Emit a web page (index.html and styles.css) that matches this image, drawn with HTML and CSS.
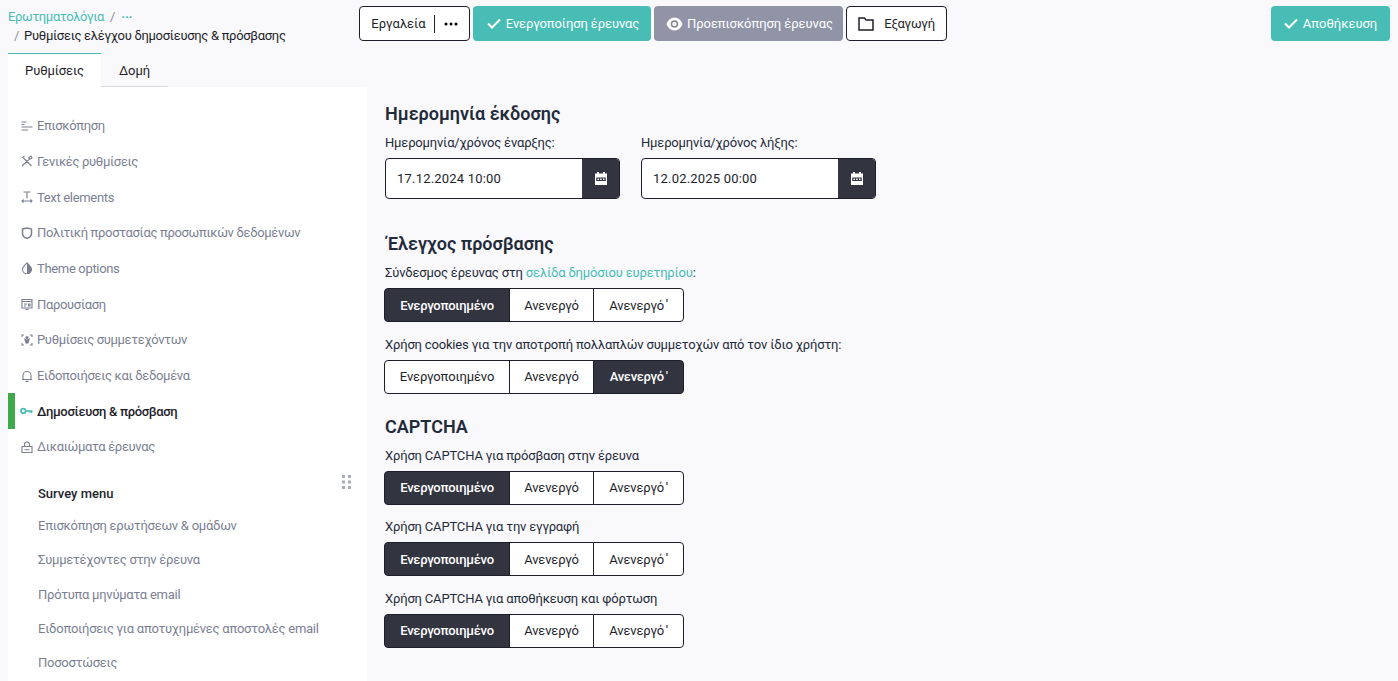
FILE: index.html
```html
<!DOCTYPE html>
<html lang="el">
<head>
  <title>Ρυθμίσεις ελέγχου δημοσίευσης & πρόσβασης</title>
  <meta charset="utf-8">
  <link rel="stylesheet" href="styles.css">
</head>
<body>
  <div class="topbar">
    <div class="breadcrumb">
      <div class="crumb-line"><a class="crumb-link">Ερωτηματολόγια</a><span class="crumb-sep">/</span><span class="crumb-more">···</span></div>
      <div class="crumb-line crumb-current"><span class="crumb-sep">/</span>Ρυθμίσεις ελέγχου δημοσίευσης &amp; πρόσβασης</div>
    </div>
    <div class="toolbar">
      <button class="btn btn-outline btn-tools">Εργαλεία<span class="tools-divider"></span>
        <svg width="14" height="4" viewBox="0 0 14 4"><circle cx="2" cy="2" r="1.5"/><circle cx="7" cy="2" r="1.5"/><circle cx="12" cy="2" r="1.5"/></svg>
      </button>
      <button class="btn btn-teal btn-activate">
        <svg class="check" width="14" height="11" viewBox="0 0 14 11"><path d="M1 5.500l4 4 8-8"/></svg>Ενεργοποίηση έρευνας
      </button>
      <button class="btn btn-gray btn-preview">
        <svg width="17" height="14" viewBox="0 0 17 14"><path fill="#fff" d="M8.500 0.500c4 0 6.800 3.200 8 6.500-1.200 3.300-4 6.500-8 6.500s-6.800-3.200-8-6.500c1.200-3.300 4-6.500 8-6.500z"/><circle cx="8.500" cy="7" r="3" fill="none" stroke="#81859a" stroke-width="1.600"/></svg>Προεπισκόπηση έρευνας
      </button>
      <button class="btn btn-outline btn-export">
        <svg width="16" height="14" viewBox="0 0 16 14"><path d="M1 1h5.500l1.500 2h7v10H1z" fill="none" stroke="#1e1e2a" stroke-width="1.500"/></svg>Εξαγωγή
      </button>
    </div>
    <button class="btn btn-teal btn-save">
      <svg class="check" width="14" height="11" viewBox="0 0 14 11"><path d="M1 5.500l4 4 8-8"/></svg>Αποθήκευση
    </button>
  </div>

  <div class="page">
    <aside class="side">
      <div class="tabs">
        <div class="tab tab-active">Ρυθμίσεις</div>
        <div class="tab">Δομή</div>
      </div>
      <div class="side-panel">
        <ul class="nav">
          <li class="nav-item">
            <svg viewBox="0 0 12 12"><path d="M0.500 2h5M0.500 4.500h3M0.500 7h11M0.500 10h6.500"/></svg>Επισκόπηση</li>
          <li class="nav-item">
            <svg viewBox="0 0 12 12"><path d="M1 11l6.500-6M2.500 3l8 8M1 3l2.500-2M8 4.500l3-1.500-1-2-2 1.500z"/></svg>Γενικές ρυθμίσεις</li>
          <li class="nav-item">
            <svg viewBox="0 0 12 12"><path d="M2.500 1h7M6 1v6.500M1 10h10M2.500 8.500L1 10l1.500 1.500M9.500 8.500L11 10l-1.500 1.500"/></svg>Text elements</li>
          <li class="nav-item">
            <svg class="icon-bold" viewBox="0 0 12 12"><path d="M1.500 2l4.500-1 4.500 1v4.500c0 2.500-2 4-4.500 5-2.500-1-4.500-2.500-4.500-5z"/></svg>Πολιτική προστασίας προσωπικών δεδομένων</li>
          <li class="nav-item">
            <svg viewBox="0 0 12 12"><path d="M6 0.800c2.500 2.500 4.500 4.500 4.500 6.500a4.500 4.500 0 0 1-9 0c0-2 2-4 4.500-6.500z"/><path class="fill" d="M6 0.800c2.500 2.500 4.500 4.500 4.500 6.500a4.500 4.500 0 0 1-4.500 4.500z"/></svg>Theme options</li>
          <li class="nav-item">
            <svg viewBox="0 0 12 12"><path d="M1 1.500h10v8.500H1zM1 3.500h10M3 6h3M3 8h2M7.500 6v2h1.500V6zM4.500 11.500h3"/></svg>Παρουσίαση</li>
          <li class="nav-item">
            <svg viewBox="0 0 12 12"><path d="M1 3V1h2M9 1h2v2M1 9v2h2M11 9v2H9"/><circle class="fill" cx="6" cy="3.500" r="1.500"/><path class="fill" d="M3 4l3 1.500L9 4 7.500 9.500h-3z"/></svg>Ρυθμίσεις συμμετεχόντων</li>
          <li class="nav-item">
            <svg viewBox="0 0 12 12"><path d="M2 9.500V5.500a4 4 0 0 1 8 0v4zM1 9.500h10M4.500 11.400h3"/></svg>Ειδοποιήσεις και δεδομένα</li>
          <li class="nav-item nav-active">
            <svg viewBox="0 0 13 12"><circle cx="3.300" cy="6" r="2.300"/><path d="M5.600 6h7M11.500 6v2M9.300 6v1.500"/></svg>Δημοσίευση &amp; πρόσβαση</li>
          <li class="nav-item">
            <svg viewBox="0 0 12 12"><path d="M1 5.500h10v6H1zM3.500 5.500V3.500a2.500 2.500 0 0 1 5 0v2M3.500 8.800h5"/></svg>Δικαιώματα έρευνας</li>
        </ul>
        <div class="menu-handle">
          <svg width="9" height="14" viewBox="0 0 9 14"><path d="M0 0h3v3H0zM6 0h3v3H6zM0 5.500h3v3H0zM6 5.500h3v3H6zM0 11h3v3H0zM6 11h3v3H6z"/></svg>
        </div>
        <div class="menu-title">Survey menu</div>
        <ul class="submenu">
          <li>Επισκόπηση ερωτήσεων &amp; ομάδων</li>
          <li>Συμμετέχοντες στην έρευνα</li>
          <li>Πρότυπα μηνύματα email</li>
          <li>Ειδοποιήσεις για αποτυχημένες αποστολές email</li>
          <li>Ποσοστώσεις</li>
        </ul>
      </div>
    </aside>

    <main class="content">
      <h2 class="section-title">Ημερομηνία έκδοσης</h2>
      <div class="date-row">
        <div class="date-field">
          <label class="field-label">Ημερομηνία/χρόνος έναρξης:</label>
          <div class="date-input">
            <span class="date-value">17.12.2024 10:00</span>
            <span class="date-addon"><svg width="12" height="13" viewBox="0 0 12 13"><path fill="#fff" d="M2 0h2v1.500h4V0h2v1.500h2V13H0V1.500h2z"/><path fill="#32343f" d="M1.200 5.500h9.600v3.500H1.200z"/><path fill="#fff" d="M2.500 6.500h1.500v1.500H2.500zM5.200 6.500h1.500v1.500H5.200zM8 6.500h1.500v1.500H8z"/></svg></span>
          </div>
        </div>
        <div class="date-field">
          <label class="field-label">Ημερομηνία/χρόνος λήξης:</label>
          <div class="date-input">
            <span class="date-value">12.02.2025 00:00</span>
            <span class="date-addon"><svg width="12" height="13" viewBox="0 0 12 13"><path fill="#fff" d="M2 0h2v1.500h4V0h2v1.500h2V13H0V1.500h2z"/><path fill="#32343f" d="M1.200 5.500h9.600v3.500H1.200z"/><path fill="#fff" d="M2.500 6.500h1.500v1.500H2.500zM5.200 6.500h1.500v1.500H5.200zM8 6.500h1.500v1.500H8z"/></svg></span>
          </div>
        </div>
      </div>

      <h2 class="section-title section-access">Έλεγχος πρόσβασης</h2>
      <div class="field-label">Σύνδεσμος έρευνας στη <a class="text-link">σελίδα δημόσιου ευρετηρίου</a>:</div>
      <div class="toggle-group">
        <span class="toggle toggle-on t-first">Ενεργοποιημένο</span><span class="toggle t-mid">Ανενεργό</span><span class="toggle t-last">Ανενεργό <sup>'</sup></span>
      </div>
      <div class="field-label">Χρήση cookies για την αποτροπή πολλαπλών συμμετοχών από τον ίδιο χρήστη:</div>
      <div class="toggle-group">
        <span class="toggle t-first">Ενεργοποιημένο</span><span class="toggle t-mid">Ανενεργό</span><span class="toggle toggle-on t-last">Ανενεργό <sup>'</sup></span>
      </div>

      <h2 class="section-title section-captcha">CAPTCHA</h2>
      <div class="field-label">Χρήση CAPTCHA για πρόσβαση στην έρευνα</div>
      <div class="toggle-group">
        <span class="toggle toggle-on t-first">Ενεργοποιημένο</span><span class="toggle t-mid">Ανενεργό</span><span class="toggle t-last">Ανενεργό <sup>'</sup></span>
      </div>
      <div class="field-label">Χρήση CAPTCHA για την εγγραφή</div>
      <div class="toggle-group">
        <span class="toggle toggle-on t-first">Ενεργοποιημένο</span><span class="toggle t-mid">Ανενεργό</span><span class="toggle t-last">Ανενεργό <sup>'</sup></span>
      </div>
      <div class="field-label">Χρήση CAPTCHA για αποθήκευση και φόρτωση</div>
      <div class="toggle-group">
        <span class="toggle toggle-on t-first">Ενεργοποιημένο</span><span class="toggle t-mid">Ανενεργό</span><span class="toggle t-last">Ανενεργό <sup>'</sup></span>
      </div>
    </main>
  </div>
</body>
</html>
```

FILE: styles.css
```css
* {
  box-sizing: border-box;
}
html, body {
  height: 100%;
}
body {
  margin: 0;
  overflow: hidden;
  background: #f9f9fb;
  color: #1e1e2a;
  font-family: Roboto, "Noto Sans", sans-serif;
  font-size: 13px;
}

/* top bar */
.topbar {
  display: flex;
  height: 53px;
  padding: 7px 8px 0;
}
.breadcrumb {
  width: 351px;
  font-size: 13px;
  letter-spacing: -0.2px;
}
.crumb-line {
  height: 19px;
  line-height: 19px;
}
.crumb-link {
  color: #48bdb5;
  letter-spacing: -0.35px;
}
.crumb-sep {
  color: #8a8fa3;
  margin: 0 6px;
}
.crumb-more {
  color: #48bdb5;
  font-weight: 700;
}
.crumb-current {
  letter-spacing: -0.3px;
}
.crumb-current .crumb-sep {
  margin-right: 5px;
}
.toolbar {
  display: flex;
  gap: 3px;
  flex: 1;
  margin-top: -1px;
}
.btn {
  display: flex;
  align-items: center;
  justify-content: center;
  height: 35px;
  padding: 0;
  border-radius: 4px;
  border: 1px solid transparent;
  font-family: inherit;
  font-size: 13px;
  cursor: pointer;
}
.btn-outline {
  background: #fff;
  border-color: #1e1e2a;
  color: #1e1e2a;
}
.btn-teal {
  background: #48bdb5;
  color: #fff;
}
.btn-gray {
  background: #9094a6;
  color: #fff;
}
.check {
  fill: none;
  stroke: #fff;
  stroke-width: 2;
  margin-right: 5px;
}
.btn-tools {
  width: 111px;
}
.tools-divider {
  width: 1px;
  height: 18px;
  background: #1e1e2a;
  margin: 0 9px 0 8px;
}
.btn-activate {
  width: 178px;
  padding-left: 2px;
  letter-spacing: -0.1px;
}
.btn-preview {
  width: 189px;
  gap: 4px;
  padding-left: 2px;
  letter-spacing: -0.05px;
}
.btn-export {
  width: 101px;
  gap: 10px;
  letter-spacing: -0.2px;
}
.btn-save {
  width: 119px;
  margin-top: -1px;
}

/* sidebar */
.page {
  display: flex;
  height: 628px;
}
.side {
  width: 359px;
  margin-left: 8px;
  flex-shrink: 0;
}
.tabs {
  display: flex;
  height: 34px;
}
.tab {
  width: 67px;
  text-align: center;
  line-height: 35px;
  border-bottom: 1px solid #d6d8df;
  letter-spacing: -0.1px;
}
.tab-active {
  width: 93px;
  background: #fff;
  border-top: 1px solid #48bdb5;
  border-bottom: 0;
  line-height: 33px;
}
.side-panel {
  position: relative;
  height: 594px;
  background: #fff;
  padding-top: 20.900px;
}
.nav {
  list-style: none;
  margin: 0;
  padding: 0;
}
.nav-item {
  display: flex;
  align-items: center;
  height: 35.700px;
  padding-left: 13px;
  color: #7b7f92;
  letter-spacing: -0.33px;
}
.nav-item svg {
  width: 12px;
  height: 12px;
  margin-right: 4px;
  fill: none;
  stroke: #7b7f92;
  stroke-width: 1.100;
}
.nav-item svg.icon-bold {
  stroke-width: 1.500;
}
.nav-item svg .fill {
  fill: #7b7f92;
  stroke: none;
}
.nav-active {
  color: #1e1e2a;
  border-left: 7px solid #3eaa4c;
  padding-left: 5px;
  font-weight: 500;
}
.nav-item.nav-active svg {
  width: 13px;
  stroke: #48bdb5;
  stroke-width: 1.700;
}
.menu-handle {
  position: absolute;
  top: 388px;
  right: 16px;
  line-height: 0;
}
.menu-handle svg {
  fill: #a9acba;
}
.menu-title {
  margin-top: 19.100px;
  padding-left: 30px;
  font-weight: 500;
  line-height: 20px;
}
.submenu {
  list-style: none;
  margin: 5.300px 0 0;
  padding: 0 0 0 30px;
  color: #7b7f92;
  letter-spacing: -0.25px;
}
.submenu li {
  height: 34.300px;
  line-height: 34.300px;
}

/* main */
.content {
  flex: 1;
  padding: 49px 0 0 18px;
}
.section-title {
  margin: 0;
  font-size: 18px;
  font-weight: 600;
  line-height: 24px;
  color: #1f2a3a;
}
.section-access {
  margin-top: 33px;
  padding-left: 2px;
}
.section-captcha {
  margin: 21px 0 1.500px;
}
.field-label {
  display: block;
  line-height: 20px;
  margin: 7px 0 5px;
  color: #1f2a3a;
  letter-spacing: -0.17px;
}
.text-link {
  color: #48bdb5;
}
.date-row {
  display: flex;
  gap: 21px;
}
.date-input {
  display: flex;
  width: 235px;
  height: 41px;
  border: 1px solid #1e1e2a;
  border-radius: 4px;
  background: #fff;
  overflow: hidden;
}
.date-value {
  flex: 1;
  padding-left: 11px;
  line-height: 39px;
  letter-spacing: 0.2px;
}
.date-addon {
  display: flex;
  align-items: center;
  justify-content: center;
  width: 37px;
  background: #32343f;
}
.toggle-group {
  display: flex;
  margin-left: -1px;
  height: 34px;
  margin-bottom: 12.500px;
}
.toggle {
  display: flex;
  align-items: center;
  justify-content: center;
  background: #fff;
  border: 1px solid #1e1e2a;
  margin-left: -1px;
  letter-spacing: -0.15px;
}
.toggle sup {
  font-size: 11px;
  font-weight: 700;
  margin: -3px 0 0 2px;
}
.toggle-on {
  background: #32343f;
  color: #fff;
  font-weight: 500;
  letter-spacing: -0.3px;
}
.t-first {
  width: 126px;
  margin-left: 0;
  border-radius: 4px 0 0 4px;
}
.t-mid {
  width: 85px;
}
.t-last {
  width: 91px;
  border-radius: 0 4px 4px 0;
}
```
